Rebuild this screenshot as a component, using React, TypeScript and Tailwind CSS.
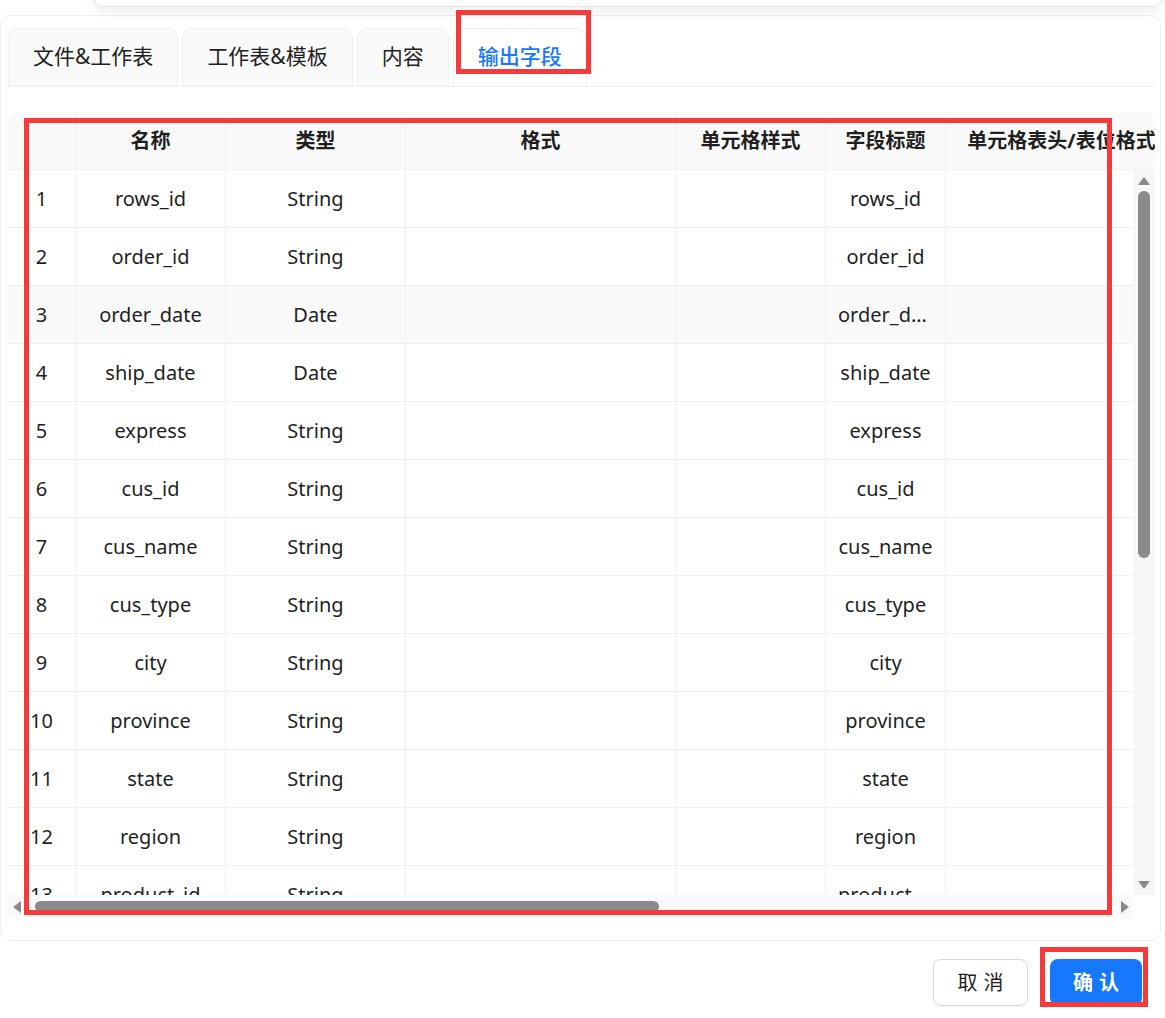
import React from "react";

const columns = [
  { key: "idx", title: "", w: "w-[68px]" },
  { key: "name", title: "名称", w: "w-[150px]" },
  { key: "type", title: "类型", w: "w-[180px]" },
  { key: "fmt", title: "格式", w: "w-[270px]" },
  { key: "style", title: "单元格样式", w: "w-[150px]" },
  { key: "label", title: "字段标题", w: "w-[120px]" },
  { key: "head", title: "单元格表头/表位格式", w: "w-[232px]" },
];

const rows: [string, string][] = [
  ["rows_id", "String"],
  ["order_id", "String"],
  ["order_date", "Date"],
  ["ship_date", "Date"],
  ["express", "String"],
  ["cus_id", "String"],
  ["cus_name", "String"],
  ["cus_type", "String"],
  ["city", "String"],
  ["province", "String"],
  ["state", "String"],
  ["region", "String"],
  ["product_id", "String"],
];

function Tab({ label, active }: { label: string; active?: boolean }) {
  return (
    <div
      className={
        "h-[58px] flex items-center px-[24px] rounded-t-[10px] border border-[#f0f0f0] text-[21px] " +
        (active
          ? "bg-white border-b-white text-[#1677ff] font-medium"
          : "bg-[#fafafa] text-[#1f1f1f]")
      }
    >
      {label}
    </div>
  );
}

export default function App() {
  return (
    <div className="relative w-[1165px] h-[1018px] bg-white overflow-hidden font-['Noto_Sans','Noto_Sans_CJK_SC',sans-serif] text-[20px] text-[#1f1f1f]">
      {/* faint input from the dialog above */}
      <div className="absolute left-[93px] top-[-20px] w-[1070px] h-[27px] rounded-[10px] border border-[#e6e6e6] bg-white shadow-[0_4px_14px_rgba(0,0,0,0.08)]" />

      {/* panel */}
      <div className="mt-[15px] w-[1161px] h-[926px] border border-[#f0f0f0] rounded-[10px] bg-white flex flex-col">
        {/* tabs */}
        <div className="mt-[12px] ml-[7px] mr-[4px] flex gap-[4px] border-b border-[#f0f0f0]">
          <Tab label="文件&工作表" />
          <Tab label="工作表&模板" />
          <Tab label="内容" />
          <Tab label="输出字段" active />
        </div>

        {/* table */}
        <div className="mt-[25px] ml-[7px] w-[1147px] h-[806px] rounded-t-[10px] overflow-hidden flex flex-col">
          {/* header */}
          <div className="flex h-[58px] bg-[#fafafa] border-b border-[#f0f0f0] shrink-0 overflow-hidden">
            {columns.map((c) => (
              <div
                key={c.key}
                className={
                  c.w +
                  " shrink-0 h-full flex items-center justify-center font-bold whitespace-nowrap border-r border-[#f0f0f0] px-[14px]"
                }
              >
                {c.title}
              </div>
            ))}
          </div>

          {/* body */}
          <div className="flex h-[725px] shrink-0">
            <div className="w-[1125px] overflow-hidden">
              <div className="w-[1170px]">
                {rows.map(([name, type], i) => (
                  <div
                    key={name}
                    className={
                      "flex h-[58px] border-b border-[#f0f0f0] " +
                      (i === 2 ? "bg-[#fafafa]" : "bg-white")
                    }
                  >
                    <div className="w-[68px] shrink-0 flex items-center justify-center border-r border-[#f0f0f0]">
                      {i + 1}
                    </div>
                    <div className="w-[150px] shrink-0 flex items-center justify-center border-r border-[#f0f0f0]">
                      {name}
                    </div>
                    <div className="w-[180px] shrink-0 flex items-center justify-center border-r border-[#f0f0f0]">
                      {type}
                    </div>
                    <div className="w-[270px] shrink-0 border-r border-[#f0f0f0]" />
                    <div className="w-[150px] shrink-0 border-r border-[#f0f0f0]" />
                    <div className="w-[120px] shrink-0 flex items-center justify-center border-r border-[#f0f0f0] px-[12px]">
                      <span className="truncate">{name}</span>
                    </div>
                    <div className="w-[232px] shrink-0" />
                  </div>
                ))}
              </div>
            </div>
            {/* vertical scrollbar */}
            <div className="w-[22px] bg-[#f7f7f7] flex flex-col items-center pt-[6px]">
              <svg width="14" height="10" viewBox="0 0 14 10">
                <path d="M1 9 L7 1 L13 9 Z" fill="#8a8a8a" />
              </svg>
              <div className="mt-[5px] w-[12px] h-[367px] rounded-full bg-[#8a8a8a]" />
              <div className="flex-1" />
              <svg width="14" height="10" viewBox="0 0 14 10" className="mb-[5px]">
                <path d="M1 1 L13 1 L7 9 Z" fill="#8a8a8a" />
              </svg>
            </div>
          </div>

          {/* horizontal scrollbar */}
          <div className="flex h-[23px] shrink-0">
            <div className="w-[1125px] bg-[#fafafa] flex items-center pl-[4px]">
              <svg width="10" height="14" viewBox="0 0 10 14">
                <path d="M9 1 L9 13 L1 7 Z" fill="#8a8a8a" />
              </svg>
              <div className="ml-[13px] w-[624px] h-[11px] rounded-full bg-[#8a8a8a]" />
              <div className="flex-1" />
              <svg width="10" height="14" viewBox="0 0 10 14" className="mr-[3px]">
                <path d="M1 1 L9 7 L1 13 Z" fill="#8a8a8a" />
              </svg>
            </div>
            <div className="w-[22px] bg-white" />
          </div>
        </div>
      </div>

      {/* footer buttons */}
      <div className="mt-[18px] mr-[23px] flex justify-end gap-[22px]">
        <button className="w-[95px] h-[47px] rounded-[8px] border border-[#d9d9d9] bg-white text-[20px] tracking-[0.3em] pl-[6px] shadow-[0_2px_0_rgba(0,0,0,0.02)]">
          取消
        </button>
        <button className="w-[92px] h-[47px] rounded-[8px] bg-[#1677ff] text-white text-[20px] tracking-[0.3em] pl-[6px] font-semibold">
          确认
        </button>
      </div>

      {/* red annotation boxes */}
      <div className="absolute left-[456px] top-[10px] w-[135px] h-[64px] border-[5px] border-[#f43a3a]" />
      <div className="absolute left-[24px] top-[118px] w-[1088px] h-[797px] border-[5px] border-[#f43a3a]" />
      <div className="absolute left-[1040px] top-[947px] w-[108px] h-[60px] border-[5px] border-[#f43a3a]" />
    </div>
  );
}
